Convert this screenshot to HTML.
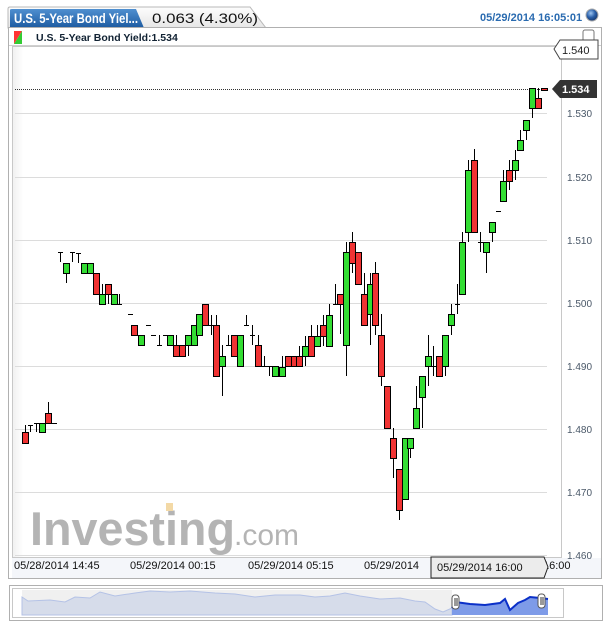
<!DOCTYPE html>
<html><head><meta charset="utf-8"><style>
body{margin:0;width:613px;height:627px;background:#fff;overflow:hidden;font-family:"Liberation Sans",sans-serif}
</style></head><body>
<svg id="s" width="613" height="627" xmlns="http://www.w3.org/2000/svg" style="position:absolute;left:0;top:0">
<defs>
<linearGradient id="tabg" x1="0" y1="0" x2="0" y2="1"><stop offset="0" stop-color="#fdfdfd"/><stop offset="1" stop-color="#e6e6e6"/></linearGradient>
<linearGradient id="blu" x1="0" y1="0" x2="0" y2="1"><stop offset="0" stop-color="#4f8fd0"/><stop offset="1" stop-color="#1c5aa0"/></linearGradient>
<linearGradient id="plotg" x1="0" y1="0" x2="1" y2="0"><stop offset="0" stop-color="#f0f0f0"/><stop offset="0.02" stop-color="#fff"/></linearGradient>
<radialGradient id="ball" cx="0.4" cy="0.35" r="0.6"><stop offset="0" stop-color="#9cc4f0"/><stop offset="0.6" stop-color="#2a5fa8"/><stop offset="1" stop-color="#1a3f78"/></radialGradient>
</defs>
<path d="M8 28 V9 Q8 7 10 7 H250 L266 28 Z" fill="url(#tabg)" stroke="#b8b8b8"/>
<path d="M10 28 V10 Q10 9 12 9 H136 L144 28 Z" fill="url(#blu)"/>
<text x="14" y="23" font-size="14" font-weight="bold" fill="#fff" textLength="124" lengthAdjust="spacingAndGlyphs">U.S. 5-Year Bond Yiel...</text>
<text x="152" y="23" font-size="14" fill="#111" textLength="106" lengthAdjust="spacingAndGlyphs">0.063 (4.30%)</text>
<text x="480" y="21" font-size="11" font-weight="bold" fill="#2a6bb0">05/29/2014 16:05:01</text>
<circle cx="592" cy="15" r="6" fill="url(#ball)" stroke="#aaa"/>
<rect x="8.5" y="27.5" width="593" height="551" fill="#fff" stroke="#b0b0b0"/>
<line x1="9" y1="45.5" x2="601" y2="45.5" stroke="#d0d0d0"/>
<path d="M14 31 H22 L14 44 Z" fill="#f33"/><path d="M22 31 V44 H14 Z" fill="#3c3"/>
<text x="36" y="41" font-size="10.5" font-weight="bold" fill="#123">U.S. 5-Year Bond Yield:1.534</text>
<rect x="583" y="30" width="11" height="12" rx="2" fill="#fff" stroke="#777"/>
<rect x="12.5" y="46.5" width="549" height="511" fill="url(#plotg)" stroke="#c8c8c8"/>
<rect x="12" y="558" width="589" height="20" fill="#f4f6fa"/>
<g id="grid" stroke="#dcdcdc"></g>
<line x1="15" y1="89.5" x2="545" y2="89.5" stroke="#333" stroke-dasharray="1,1"/>
<text x="30" y="545" font-size="47" font-weight="bold" fill="#b4b4b4" textLength="205" lengthAdjust="spacingAndGlyphs">Investing</text>
<rect x="166" y="503" width="7" height="8" fill="#f3d9a6"/>
<text x="234" y="545" font-size="30" fill="#b4b4b4" textLength="65" lengthAdjust="spacingAndGlyphs">.com</text>
<g id="c"></g>
<g font-size="10" fill="#4a5868" id="ax"></g>
<path d="M554 49 L560 40 H598 V59 H560 Z" fill="#fff" stroke="#444"/>
<text x="562" y="54" font-size="11" fill="#222">1.540</text>
<path d="M552 89 L560 80 H597 V98 H560 Z" fill="#333"/>
<text x="562" y="93" font-size="11" font-weight="bold" fill="#fff">1.534</text>
<g font-size="11" fill="#111">
<text x="14" y="569">05/28/2014 14:45</text>
<text x="130" y="569">05/29/2014 00:15</text>
<text x="248" y="569">05/29/2014 05:15</text>
<text x="364" y="569">05/29/2014</text>
<text x="543" y="569">16:00</text>
</g>
<path d="M431 557 H544 L548 567 L544 578 H431 Z" fill="#ececec" stroke="#222"/>
<text x="437" y="571" font-size="11" fill="#111">05/29/2014 16:00</text>
<rect x="9.5" y="585.5" width="593" height="35" fill="#fff" stroke="#b0b0b0"/>
<rect x="12.5" y="588.5" width="551" height="29" fill="#fff" stroke="#c8c8c8"/>
<rect x="22" y="590" width="430" height="25" fill="#f0f0f0"/>
<path d="M22 597 L28 601 L50 600 L65 602 L75 597 L90 598 L100 592 L115 596 L135 593 L150 591 L170 592 L190 591 L215 593 L235 594 L255 597 L275 595 L300 595 L315 597 L330 596 L345 593 L360 596 L380 599 L400 598 L415 601 L425 602 L435 609 L443 612 L452 608 L452 615 L22 615 Z" fill="#d6dcea" stroke="#b4c2e6"/>
<path d="M452 608 L455 602 L470 604 L485 605 L500 603 L505 599 L510 610 L518 603 L525 600 L530 597 L540 598 L548 599 L548 615 L452 615 Z" fill="#7e9be8"/>
<path d="M452 608 L455 602 L470 604 L485 605 L500 603 L505 599 L510 610 L518 603 L525 600 L530 597 L540 598 L548 599" fill="none" stroke="#0b30c8" stroke-width="2"/>
<rect x="452" y="595" width="7" height="14" rx="3" fill="#fff" stroke="#555"/>
<line x1="455" y1="598" x2="455" y2="606" stroke="#333"/><line x1="457" y1="598" x2="457" y2="606" stroke="#333"/>
<rect x="538" y="594" width="7" height="14" rx="3" fill="#fff" stroke="#555"/>
<line x1="541" y1="597" x2="541" y2="605" stroke="#333"/><line x1="543" y1="597" x2="543" y2="605" stroke="#333"/>
</svg>
<script>
var NS="http://www.w3.org/2000/svg";
function el(p,t,a){var e=document.createElementNS(NS,t);for(var k in a)e.setAttribute(k,a[k]);p.appendChild(e);return e;}
var g=document.getElementById("grid"),ax=document.getElementById("ax");
var lv=[[113,"1.530"],[177,"1.520"],[240,"1.510"],[303,"1.500"],[366,"1.490"],[429,"1.480"],[492,"1.470"],[555,"1.460"]];
lv.forEach(function(l){el(g,"line",{x1:15,x2:547,y1:l[0]+.5,y2:l[0]+.5});var t=el(ax,"text",{x:567,y:l[0]+4});t.textContent=l[1];});
var C=[[25,432,443,425,443,"r"],[30,425,425,425,432,"d"],[36,423,423,423,432,"d"],[42,423,432,423,432,"g"],[48,413,423,402,423,"r"],[54,423,423,423,423,"d"],
[60,252,252,252,262,"d"],[66,263,273,263,283,"g"],[72,252,252,252,262,"d"],[78,253,253,253,263,"d"],[84,263,273,263,273,"g"],[90,263,273,263,273,"g"],[96,273,294,273,294,"r"],
[102,294,304,284,304,"g"],[108,284,294,284,304,"r"],[114,294,304,294,304,"g"],[119,304,304,294,304,"d"],[130,314,314,314,314,"d"],[134,325,335,325,335,"r"],[141,335,345,335,345,"g"],
[148,325,325,325,325,"d"],[153,335,335,335,335,"d"],[159,345,345,335,345,"d"],[165,335,335,335,335,"d"],[170,335,345,335,345,"g"],[176,345,356,335,356,"r"],[182,345,356,345,356,"r"],
[188,335,345,335,356,"g"],[194,325,345,325,345,"g"],[199,314,335,314,335,"g"],[205,304,325,304,325,"r"],[211,325,325,315,335,"d"],[216,325,376,315,376,"r"],[222,356,366,345,396,"g"],
[228,345,345,335,345,"d"],[234,335,356,335,356,"r"],[240,335,366,335,366,"g"],[246,325,325,315,325,"d"],[252,335,335,325,345,"d"],[258,345,366,335,366,"r"],[264,366,366,356,366,"d"],
[269,366,366,366,376,"d"],[275,366,376,366,376,"g"],[282,367,376,356,376,"g"],[288,356,366,356,366,"r"],[294,356,366,356,366,"r"],[299,356,366,346,366,"r"],[305,346,356,336,366,"g"],
[311,336,356,325,356,"r"],[317,336,346,325,346,"g"],[323,325,336,315,346,"r"],[329,315,346,304,346,"g"],[335,304,304,284,304,"d"],[340,294,304,294,334,"r"],[346,252,345,242,376,"g"],
[352,242,263,232,273,"r"],[358,252,284,252,284,"r"],[364,294,325,273,325,"r"],[370,284,314,273,345,"g"],[375,273,325,262,335,"r"],[381,335,376,314,386,"r"],[387,386,428,386,428,"r"],
[393,438,458,428,478,"r"],[399,469,510,469,520,"r"],[405,438,499,438,499,"g"],[410,438,448,438,458,"g"],[416,408,428,386,428,"g"],[422,376,397,376,428,"g"],[428,356,366,335,386,"g"],
[433,366,366,346,376,"d"],[439,356,376,356,376,"r"],[445,335,366,335,376,"g"],[451,314,325,304,335,"g"],[457,304,304,284,314,"d"],[462,242,294,232,294,"g"],[468,170,232,160,242,"g"],
[474,160,232,149,232,"r"],[480,242,242,232,252,"d"],[486,242,252,242,273,"g"],[492,222,232,222,242,"g"],[498,211,211,211,211,"d"],[503,181,201,170,201,"g"],[509,170,181,160,190,"r"],
[515,160,170,150,180,"g"],[520,140,150,130,150,"g"],[526,120,130,120,140,"g"],[532,88,108,88,118,"g"],[538,98,108,88,108,"r"],[544,88,90,88,90,"r"]];
var c=document.getElementById("c");
C.forEach(function(k){var x=k[0];
el(c,"line",{x1:x+.5,x2:x+.5,y1:k[3],y2:k[4],stroke:"#000"});
if(k[5]=="d"){el(c,"line",{x1:x-2,x2:x+3,y1:k[1]+.5,y2:k[1]+.5,stroke:"#000"});}
else el(c,"rect",{x:x-2.5,y:k[1]+.5,width:6,height:Math.max(2,k[2]-k[1]),fill:k[5]=="g"?"#33dd33":"#f03333",stroke:"#000"});
});
</script>
</body></html>
